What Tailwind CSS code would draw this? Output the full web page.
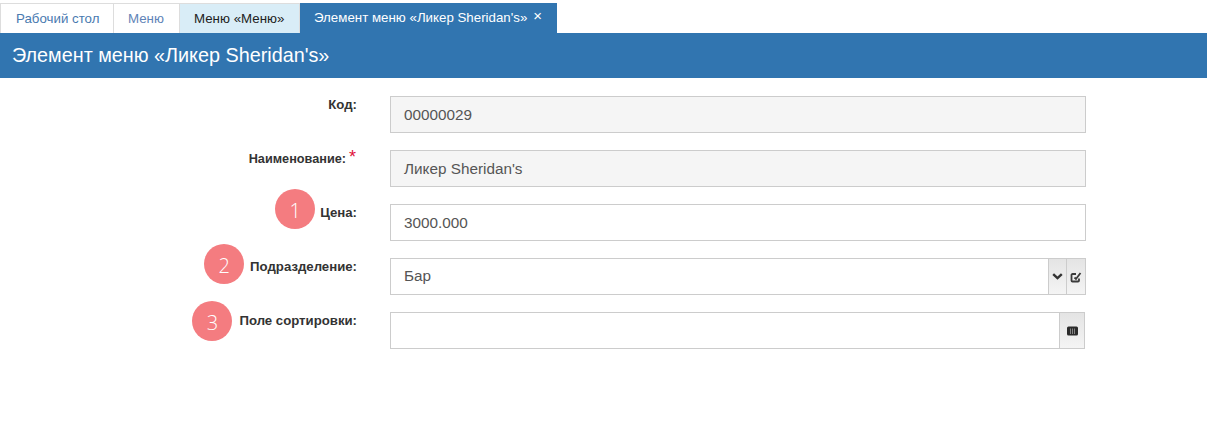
<!DOCTYPE html>
<html lang="ru">
<head>
<meta charset="UTF-8">
<title>Элемент меню</title>
<script src="https://cdn.jsdelivr.net/npm/@tailwindcss/browser@4"></script>
</head>
<body class="bg-white font-['Liberation_Sans',sans-serif] h-[434px] overflow-hidden">
    <!-- tabs -->
    <div class="flex h-[33px] pt-[3px] text-[13.3px]">
        <a class="flex items-center w-[114px] pl-[15px] border border-b-0 border-[#ddd] text-[#4a7ab0]">Рабочий стол</a>
        <a class="flex items-center w-[66px] pl-[14px] border-r border-t border-[#ddd] text-[#5f84b8]">Меню</a>
        <a class="flex items-center w-[120px] pl-[14px] border-r border-t border-[#ddd] bg-[#d9edf7] text-[#222]">Меню «Меню»</a>
        <a class="flex items-center w-[257px] pl-[14px] bg-[#3175b0] text-white">Элемент меню «Ликер Sheridan's»<span class="ml-[6px] mb-[6px] text-[15px] leading-none">×</span></a>
    </div>
    <div class="h-[45px] bg-[#3175b0] flex items-center px-[12px] text-white text-[19.8px]">Элемент меню «Ликер Sheridan's»</div>

    <!-- form -->
    <div class="pt-[18px] text-[15.3px] text-[#555]">
        <div class="flex h-[37px] mb-[17px]">
            <label class="w-[357px] text-right font-bold text-[13.2px] text-[#333] leading-[16px] pt-[1px]">Код:</label>
            <div class="ml-[33px] w-[696px] border border-[#ccc] bg-[#f5f5f5] flex items-center px-[13px] pt-[1px]">00000029</div>
        </div>
        <div class="flex h-[37px] mb-[17px]">
            <label class="w-[357px] flex justify-end font-bold text-[12.7px] text-[#333] leading-[16px] pt-[1px]">Наименование:<span class="inline-block -translate-y-[3px] text-[#e0103a] font-normal text-[18px] leading-none pl-[3px] pr-[1px]">*</span></label>
            <div class="ml-[33px] w-[696px] border border-[#ccc] bg-[#f5f5f5] flex items-center px-[13px] pt-[1px]">Ликер Sheridan's</div>
        </div>
        <div class="flex h-[37px] mb-[17px]">
            <label class="w-[357px] flex justify-end gap-[5px] font-bold text-[13.2px] text-[#333] leading-[16px]">
                <span class="w-[40px] h-[40px] -mt-[15px] pt-[3px] rounded-full bg-[#f47c80] text-white text-[20px] font-light font-['Open_Sans',sans-serif] flex items-center justify-center">1</span>
                <span class="pt-[1px]">Цена:</span>
            </label>
            <div class="ml-[33px] w-[696px] border border-[#ccc] flex items-center px-[13px] pt-[1px]">3000.000</div>
        </div>
        <div class="flex h-[37px] mb-[17px]">
            <label class="w-[357px] flex justify-end gap-[6px] font-bold text-[13.2px] text-[#333] leading-[16px]">
                <span class="w-[40px] h-[40px] -mt-[14px] pt-[3px] rounded-full bg-[#f47c80] text-white text-[20px] font-light font-['Open_Sans',sans-serif] flex items-center justify-center">2</span>
                <span class="pt-[1px]">Подразделение:</span>
            </label>
            <div class="ml-[33px] w-[696px] border border-[#ccc] flex items-center pl-[13px]">
                <span class="flex-1">Бар</span>
                <span class="w-[18px] h-full bg-linear-to-b from-[#e4e4e4] to-[#f4f4f4] border-l border-[#ccc] flex items-center justify-center">
                    <svg width="11" height="7" viewBox="0 0 11 7"><path d="M1.2 1.2l4.3 4 4.3-4" fill="none" stroke="#333" stroke-width="2.4"/></svg>
                </span>
                <span class="w-[19px] h-full bg-linear-to-b from-[#e4e4e4] to-[#f4f4f4] border-l border-[#ccc] flex items-center justify-center">
                    <svg width="12" height="12" viewBox="0 0 12 12"><path d="M9 7.5v2a1 1 0 0 1-1 1H2.5a1 1 0 0 1-1-1V4a1 1 0 0 1 1-1H6" fill="none" stroke="#3a3a3a" stroke-width="1.8"/><path d="M4.5 6.5l1.5 1.5 4.5-6" fill="none" stroke="#3a3a3a" stroke-width="1.8"/></svg>
                </span>
            </div>
        </div>
        <div class="flex h-[37px]">
            <label class="w-[357px] flex justify-end gap-[7px] font-bold text-[13.2px] text-[#333] leading-[16px]">
                <span class="w-[40px] h-[40px] -mt-[11px] pt-[3px] rounded-full bg-[#f47c80] text-white text-[20px] font-light font-['Open_Sans',sans-serif] flex items-center justify-center">3</span>
                <span class="pt-[1px]">Поле сортировки:</span>
            </label>
            <div class="ml-[33px] w-[695px] border border-[#ccc] flex items-center pl-[13px]">
                <span class="flex-1"></span>
                <span class="w-[25px] h-full bg-linear-to-b from-[#e4e4e4] to-[#f4f4f4] border-l border-[#ccc] flex items-center justify-center">
                    <svg width="11" height="10" viewBox="0 0 11 10"><rect x="0" y="0.5" width="11" height="9" rx="1.5" fill="#2b2b2b"/><path d="M3.5 2.5v5.5M5.5 2.5v5.5M7.5 2.5v5.5" stroke="#9a9a9a" stroke-width="0.8"/></svg>
                </span>
            </div>
        </div>
    </div>
</body>
</html>
